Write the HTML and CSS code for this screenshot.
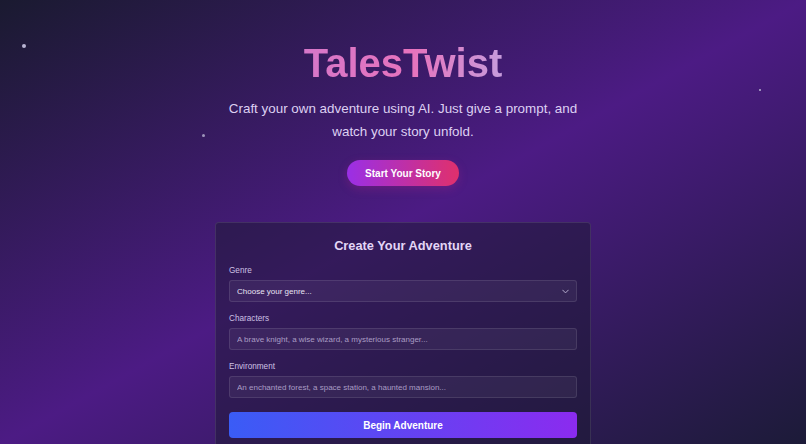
FILE: index.html
```html
<!DOCTYPE html>
<html lang="en">
<head>
    <meta charset="UTF-8">
    <meta name="viewport" content="width=device-width, initial-scale=1.0">
    <title>TalesTwist</title>
    <link rel="stylesheet" href="styles.css">
</head>
<body>
    <div class="stars">
        <span class="star star-1"></span>
        <span class="star star-2"></span>
        <span class="star star-3"></span>
    </div>

    <header class="hero">
        <h1 class="logo">TalesTwist</h1>
        <p class="tagline">Craft your own adventure using AI. Just give a prompt, and watch your story unfold.</p>
        <button class="button start-button">Start Your Story</button>
    </header>

    <main class="card">
        <h2>Create Your Adventure</h2>
        <form class="story-form">
            <div class="field">
                <label for="genre">Genre</label>
                <div class="select-wrap">
                    <select id="genre">
                        <option>Choose your genre...</option>
                        <option>Fantasy</option>
                        <option>Sci-Fi</option>
                        <option>Horror</option>
                    </select>
                    <svg class="chevron" viewBox="0 0 10 6" width="7" height="5">
                        <path d="M1 1l4 4 4-4" fill="none" stroke="#b8b0d0" stroke-width="1.4" stroke-linecap="round" stroke-linejoin="round"/>
                    </svg>
                </div>
            </div>
            <div class="field">
                <label for="characters">Characters</label>
                <input type="text" id="characters" placeholder="A brave knight, a wise wizard, a mysterious stranger...">
            </div>
            <div class="field">
                <label for="environment">Environment</label>
                <input type="text" id="environment" placeholder="An enchanted forest, a space station, a haunted mansion...">
            </div>
            <button type="button" class="button begin-button">Begin Adventure</button>
        </form>
    </main>
</body>
</html>
```

FILE: styles.css
```css
:root {
    --text: #e6dcf5;
    --muted: #cdc0e4;
    --placeholder: #a99cc4;
    --border: rgba(255, 255, 255, 0.1);
}

* {
    box-sizing: border-box;
}

html, body {
    height: 100%;
}

body {
    font-family: "Liberation Sans", Arial, sans-serif;
    margin: 0;
    overflow: hidden;
    background: linear-gradient(to bottom right, #1a1a30 0%, #4c1b84 50%, #1c1b38 100%);
    color: var(--text);
}

.stars .star {
    position: absolute;
    border-radius: 50%;
    background: #b9b4d2;
}

.star-1 {
    left: 22px;
    top: 44px;
    width: 4px;
    height: 4px;
}

.star-2 {
    left: 202px;
    top: 134px;
    width: 3px;
    height: 3px;
    opacity: 0.8;
}

.star-3 {
    left: 759px;
    top: 89px;
    width: 2px;
    height: 2px;
    background: #a58ad6;
}

.hero {
    display: flex;
    flex-direction: column;
    align-items: center;
    text-align: center;
    padding-top: 39px;
}

.logo {
    margin: 0;
    font-size: 40px;
    line-height: 48px;
    font-weight: bold;
    background: linear-gradient(90deg, #d677c9 0%, #e773bd 55%, #c79cdc 100%);
    -webkit-background-clip: text;
    background-clip: text;
    color: transparent;
}

.tagline {
    margin: 10px 0 0;
    max-width: 370px;
    font-size: 13.4px;
    line-height: 23px;
    color: #ddd0f2;
}

.button {
    border: none;
    cursor: pointer;
    font-family: inherit;
    font-weight: bold;
    color: #fff;
}

.start-button {
    margin-top: 17px;
    width: 112px;
    height: 26px;
    border-radius: 13px;
    font-size: 10px;
    background: linear-gradient(90deg, #9a2fe6 0%, #e0306c 100%);
    box-shadow: 0 3px 10px rgba(200, 40, 140, 0.25);
}

.card {
    width: 376px;
    margin: 36px auto 0;
    padding: 14px 13px 20px;
    background: rgba(28, 26, 50, 0.5);
    border: 1px solid var(--border);
    border-radius: 4px;
}

.card h2 {
    margin: 0;
    text-align: center;
    font-size: 12.8px;
    line-height: 18px;
    color: #e3d6f6;
}

.story-form {
    margin-top: 10px;
}

.field {
    margin-bottom: 11px;
}

.field label {
    display: block;
    font-size: 8.2px;
    line-height: 12px;
    margin-bottom: 3px;
    color: var(--muted);
}

.field input,
.field select {
    display: block;
    width: 100%;
    height: 22px;
    padding: 0 7px;
    font-family: inherit;
    font-size: 8px;
    color: #e8e4f4;
    background: rgba(255, 255, 255, 0.05);
    border: 1px solid var(--border);
    border-radius: 3px;
    outline: none;
    appearance: none;
    -webkit-appearance: none;
}

.field input::placeholder {
    color: var(--placeholder);
}

.field select option {
    background: #2a2145;
}

.select-wrap {
    position: relative;
}

.chevron {
    position: absolute;
    right: 8px;
    top: 9px;
}

.begin-button {
    display: block;
    width: 100%;
    height: 26px;
    margin-top: 14px;
    border-radius: 4px;
    font-size: 10px;
    background: linear-gradient(90deg, #3a5cf6 0%, #8b2bef 100%);
}
```
